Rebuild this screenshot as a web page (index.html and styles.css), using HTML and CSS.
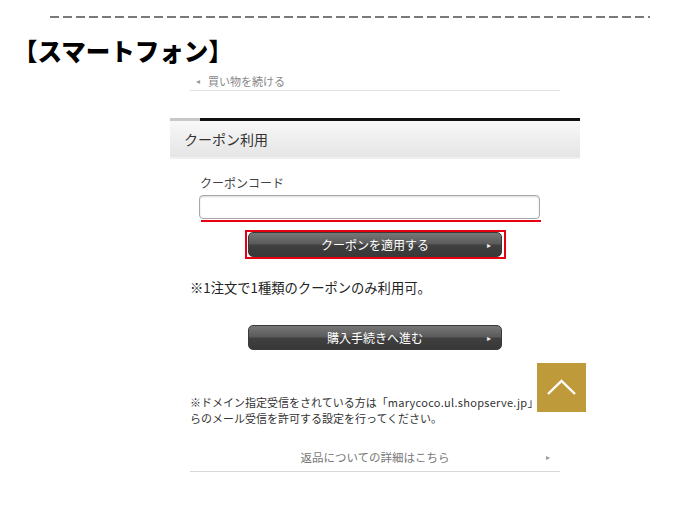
FILE: index.html
```html
<!DOCTYPE html>
<html lang="ja">
<head>
<meta charset="utf-8">
<link rel="stylesheet" href="styles.css">
</head>
<body>
<div class="page">
  <div class="dash"></div>
  <h1 class="title">【スマートフォン】</h1>
  <div class="back"><span class="back-arrow">◂</span><span>買い物を続ける</span></div>

  <section class="section">
    <div class="bar"></div>
    <div class="head">クーポン利用</div>
    <div class="content">
      <div class="label">クーポンコード</div>
      <input class="code" type="text">
      <div class="underline"></div>
      <div class="apply-box">
        <button class="btn">クーポンを適用する<span class="btn-arrow">▸</span></button>
      </div>
      <p class="note1">※1注文で1種類のクーポンのみ利用可。</p>
      <button class="btn btn-proceed">購入手続きへ進む<span class="btn-arrow">▸</span></button>
      <p class="note2">※ドメイン指定受信をされている方は「<span class="latin">marycoco.ul.shopserve.jp</span>」か<br>らのメール受信を許可する設定を行ってください。</p>
      <div class="return"><span></span><span class="return-text">返品についての詳細はこちら</span><span class="return-arrow">▸</span></div>
    </div>
  </section>

  <a class="to-top" aria-label="top">
    <svg width="49" height="49" viewBox="0 0 49 49"><polyline points="11,31 24.5,18 38,31" fill="none" stroke="#fff" stroke-width="2.4"/></svg>
  </a>
</div>
</body>
</html>
```

FILE: styles.css
```css
html, body {
  margin: 0;
  padding: 0;
  background: #fff;
}
body {
  font-family: "Noto Sans CJK JP", "Noto Sans", sans-serif;
  color: #333;
}
.page {
  position: relative;
  width: 700px;
  height: 505px;
  overflow: hidden;
}
.dash {
  margin: 16px 0 0 50px;
  width: 600px;
  height: 2px;
  background: repeating-linear-gradient(90deg, #7a7a7a 0 9px, transparent 9px 13px);
}
.title {
  margin: 19px 0 0 13px;
  font-size: 24.5px;
  line-height: 28px;
  font-weight: 900;
  color: #000;
}
.back {
  margin: 9px 0 0 190px;
  width: 370px;
  height: 16px;
  border-bottom: 1px solid #e0e0e0;
  font-size: 11px;
  line-height: 14px;
  color: #888;
  display: flex;
  gap: 8px;
  overflow: hidden;
}
.back-arrow {
  margin-left: 6px;
  font-size: 8px;
  color: #999;
}
.section {
  margin: 27px 0 0 170px;
  width: 410px;
}
.bar {
  height: 3px;
  background: linear-gradient(90deg, #c8c8c8 0 30px, #111 30px);
}
.head {
  height: 36px;
  padding-left: 14px;
  font-size: 14px;
  line-height: 36px;
  color: #333;
  background: linear-gradient(#f8f8f8, #e5e5e5);
  border-bottom: 2px solid #f0f0f0;
}
.content {
  padding-top: 15px;
  width: 410px;
}
.label {
  margin-left: 30px;
  font-size: 12px;
  line-height: 18px;
  color: #444;
}
.code {
  display: block;
  box-sizing: border-box;
  margin: 3px 0 0 29px;
  width: 341px;
  height: 24px;
  border: 1px solid #a8a8a8;
  border-radius: 4px;
  box-shadow: inset 0 1px 2px rgba(0,0,0,0.15);
  background: #fff;
  padding: 0;
}
.underline {
  margin: 1px 0 0 31px;
  width: 340px;
  height: 2px;
  background: #e60012;
}
.apply-box {
  box-sizing: border-box;
  margin: 8px 0 0 75px;
  width: 261px;
  height: 29px;
  border: 2px solid #e60012;
  padding: 0 2px 0 1px;
}
.btn {
  position: relative;
  display: block;
  box-sizing: border-box;
  width: 254px;
  height: 25px;
  margin: 0;
  padding: 0;
  border: 1px solid #3a3a3a;
  border-radius: 5px;
  background: linear-gradient(#777 0%, #5a5a5a 48%, #404040 52%, #383838 100%);
  color: #fff;
  font-family: inherit;
  font-size: 12px;
  line-height: 23px;
  text-align: center;
}
.btn-arrow {
  position: absolute;
  right: 10px;
  top: 0;
  font-size: 8px;
  color: #eee;
}
.note1 {
  margin: 19px 0 0 20px;
  font-size: 13.3px;
  line-height: 20px;
  color: #222;
}
.btn-proceed {
  margin: 27px 0 0 78px;
}
.note2 {
  margin: 44px 0 0 20px;
  width: 380px;
  font-size: 11px;
  line-height: 16px;
  color: #333;
  white-space: nowrap;
}
.latin {
  letter-spacing: 0.3px;
}
.return {
  margin: 21px 0 0 20px;
  width: 370px;
  height: 24px;
  border-bottom: 1px solid #d8d8d8;
  display: grid;
  grid-template-columns: 1fr auto 1fr;
  font-size: 11.5px;
  line-height: 20px;
  color: #777;
}
.return-arrow {
  justify-self: end;
  padding-right: 10px;
  font-size: 8px;
  color: #999;
}
.to-top {
  position: absolute;
  left: 537px;
  top: 363px;
  width: 49px;
  height: 49px;
  background: #bf9a3a;
  display: block;
}
.to-top svg {
  display: block;
}
```
